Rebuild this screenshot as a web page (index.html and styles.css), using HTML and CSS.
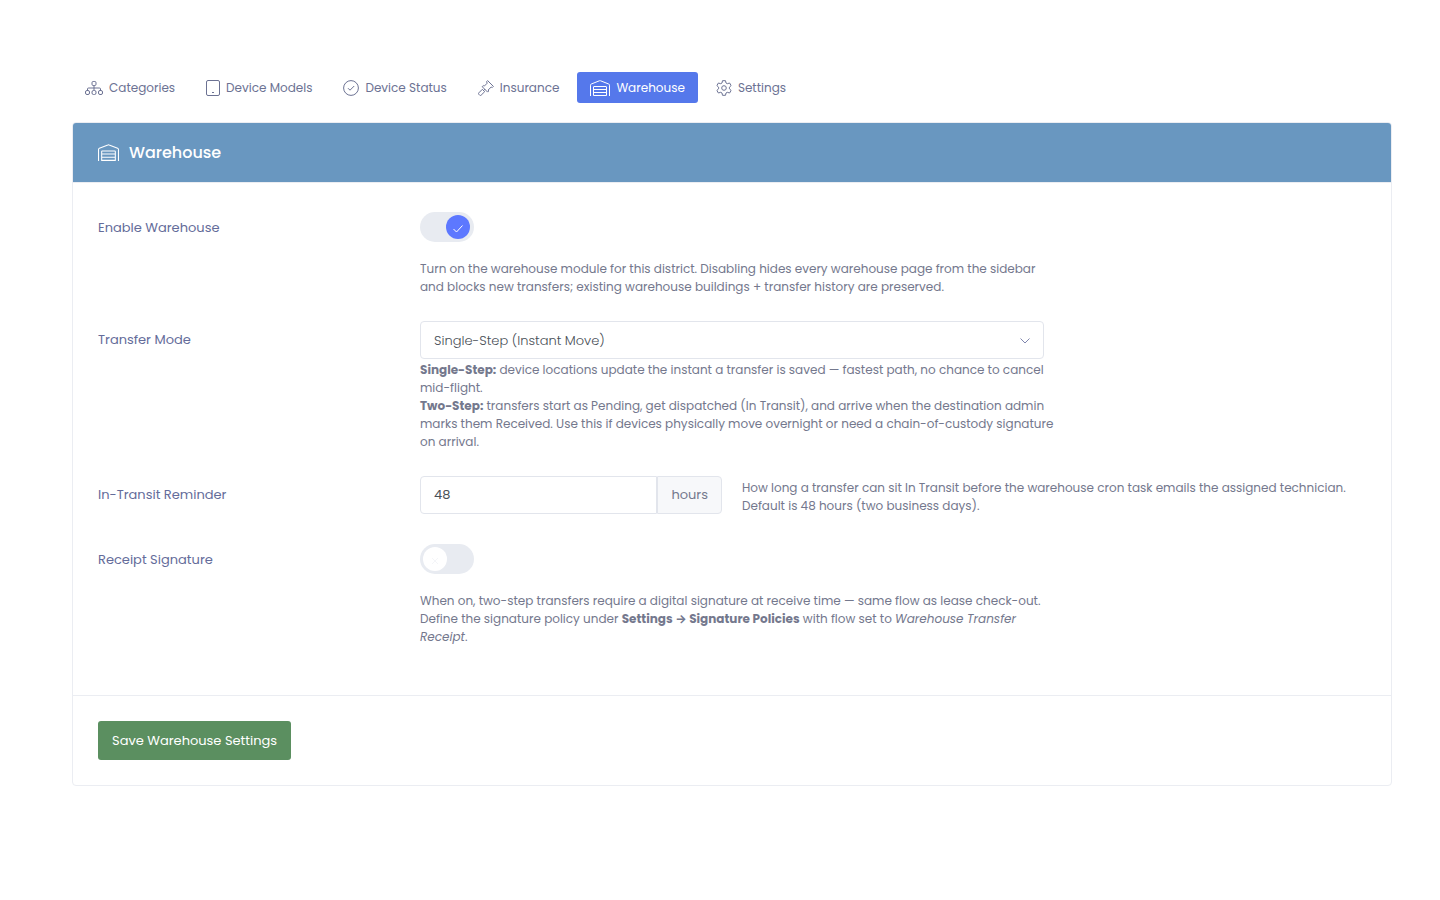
FILE: index.html
```html
<!DOCTYPE html>
<html lang="en">
<head>
    <meta charset="UTF-8">
    <meta name="viewport" content="width=device-width, initial-scale=1.0">
    <title>Warehouse Settings</title>
    <link rel="stylesheet" href="styles.css">
</head>
<body>
    <!-- Shared icon, used in the nav and the card header -->
    <svg class="sprite" aria-hidden="true">
        <symbol id="icon-warehouse" viewBox="0 0 20 16">
            <path d="M.5 16V5.2Q.5 4.3 1.3 4L9.4.8Q10 .5 10.6.8L18.7 4Q19.5 4.3 19.5 5.2V16"/>
            <path d="M3.5 15.5V7Q3.5 6.5 4 6.5H16Q16.5 6.5 16.5 7V15.5ZM3.5 9.5H16.5M3.5 12.5H16.5"/>
        </symbol>
    </svg>

    <div class="page">
        <nav class="nav">
            <a class="nav-link" href="#categories">
                <svg class="icon" width="18" height="16" viewBox="0 0 18 16">
                    <rect x="7" y="1.5" width="4" height="4" rx="1.2"/>
                    <rect x=".5" y="10.5" width="4" height="4" rx="1.5"/>
                    <rect x="7" y="10.5" width="4" height="4" rx="1.5"/>
                    <rect x="13.5" y="10.5" width="4" height="4" rx="1.5"/>
                    <path d="M9 5.5V10.5M2.5 10.5V9Q2.5 8 3.5 8H14.5Q15.5 8 15.5 9V10.5"/>
                </svg>
                Categories
            </a>
            <a class="nav-link" href="#models">
                <svg class="icon" width="14" height="16" viewBox="0 0 14 16">
                    <rect x=".5" y=".5" width="13" height="15" rx="1.5"/>
                    <path d="M6 12.5H8"/>
                </svg>
                Device Models
            </a>
            <a class="nav-link" href="#status">
                <svg class="icon" width="16" height="16" viewBox="0 0 16 16">
                    <circle cx="8" cy="8" r="7.4"/>
                    <path d="M5 8.2L7 10.2L11.2 6"/>
                </svg>
                Device Status
            </a>
            <a class="nav-link" href="#insurance">
                <svg class="icon" width="16" height="16" viewBox="0 0 16 16">
                    <path d="M9.6 .6L15.4 6.4L14.3 7.5L13.2 7L10.2 10L10.7 11L9.6 12.1L4.2 6.7L5.3 5.6L6.3 6.1L9.2 3.2L8.6 1.7Z"/>
                    <path d="M7.2 9L5.6 10.6M4.3 9.3L6.7 11.7L3.1 15.2Q2.4 15.8 1.7 15.2L.8 14.3Q.2 13.6 .8 12.9Z"/>
                </svg>
                Insurance
            </a>
            <a class="nav-link active" href="#warehouse" aria-current="page">
                <svg class="icon" width="20" height="16"><use href="#icon-warehouse"/></svg>
                Warehouse
            </a>
            <a class="nav-link" href="#settings">
                <svg class="icon" width="16" height="16" viewBox="0 0 16 16">
                    <path d="M6.5 .7H9.5L10 3L11.3 3.7L13.6 3L15.1 5.6L13.4 7.2V8.8L15.1 10.4L13.6 13L11.3 12.3L10 13L9.5 15.3H6.5L6 13L4.7 12.3L2.4 13L.9 10.4L2.6 8.8V7.2L.9 5.6L2.4 3L4.7 3.7L6 3Z"/>
                    <circle cx="8" cy="8" r="2.3"/>
                </svg>
                Settings
            </a>
        </nav>

        <form class="card">
            <div class="card-header">
                <svg class="icon" width="21" height="17"><use href="#icon-warehouse"/></svg>
                <h1 class="card-title">Warehouse</h1>
            </div>

            <div class="card-body">
                <div class="row row-switch">
                    <label class="label" for="enable">Enable Warehouse</label>
                    <div class="field">
                        <span class="switch">
                            <input type="checkbox" id="enable" checked>
                            <svg class="switch-mark" width="24" height="24" viewBox="0 0 24 24"><path d="M7.5 14L10.5 17L16.5 10.5"/></svg>
                        </span>
                        <p class="help">Turn on the warehouse module for this district. Disabling hides every warehouse page from the sidebar<br>
                            and blocks new transfers; existing warehouse buildings + transfer history are preserved.</p>
                    </div>
                </div>

                <div class="row">
                    <label class="label" for="mode">Transfer Mode</label>
                    <div class="field">
                        <div class="select">
                            <select class="control" id="mode">
                                <option>Single-Step (Instant Move)</option>
                                <option>Two-Step</option>
                            </select>
                            <svg class="select-arrow" width="10" height="6" viewBox="0 0 10 6"><path d="M.5 .5L5 5L9.5 .5"/></svg>
                        </div>
                        <p class="help"><strong>Single-Step:</strong> device locations update the instant a transfer is saved — fastest path, no chance to cancel<br>
                            mid-flight.<br>
                            <strong>Two-Step:</strong> transfers start as Pending, get dispatched (In Transit), and arrive when the destination admin<br>
                            marks them Received. Use this if devices physically move overnight or need a chain-of-custody signature<br>
                            on arrival.</p>
                    </div>
                </div>

                <div class="row">
                    <label class="label" for="reminder">In-Transit Reminder</label>
                    <div class="input-group">
                        <input class="control" type="text" inputmode="numeric" id="reminder" value="48">
                        <span class="addon">hours</span>
                    </div>
                    <p class="help help-side">How long a transfer can sit In Transit before the warehouse cron task emails the assigned technician.<br>
                        Default is 48 hours (two business days).</p>
                </div>

                <div class="row row-switch">
                    <label class="label" for="signature">Receipt Signature</label>
                    <div class="field">
                        <span class="switch">
                            <input type="checkbox" id="signature">
                            <svg class="switch-mark" width="24" height="24" viewBox="0 0 24 24"><path d="M9 11L15 17M15 11L9 17"/></svg>
                        </span>
                        <p class="help">When on, two-step transfers require a digital signature at receive time — same flow as lease check-out.<br>
                            Define the signature policy under <strong>Settings → Signature Policies</strong> with flow set to <em>Warehouse Transfer<br>
                            Receipt</em>.</p>
                    </div>
                </div>
            </div>

            <div class="card-footer">
                <button class="btn" type="submit">Save Warehouse Settings</button>
            </div>
        </form>
    </div>
</body>
</html>
```
FILE: styles.css
```css
* {
    margin: 0;
    padding: 0;
    box-sizing: border-box;
}

body {
    font-family: Poppins, Inter, sans-serif;
    font-size: 13px;
    color: #646c9a;
    background: #fff;
}

input, select, button {
    font: inherit;
}

.sprite {
    position: absolute;
    width: 0;
    height: 0;
}

.icon {
    flex: none;
    fill: none;
    stroke: currentColor;
    stroke-width: 1;
    stroke-linejoin: round;
}

.page {
    padding: 72px 48px 72px 72px;
}

/* Nav */
.nav {
    display: flex;
    gap: 5px;
    margin-bottom: 19px;
}

.nav-link {
    display: flex;
    align-items: center;
    gap: 6px;
    height: 31px;
    padding: 0 13px;
    border-radius: 3px;
    font-size: 12px;
    color: #6c7293;
    text-decoration: none;
}

.nav-link.active {
    background: #5578eb;
    color: #fff;
}

/* Card */
.card {
    border: 1px solid #ebedf2;
    border-radius: 4px;
}

.card-header {
    display: flex;
    align-items: center;
    gap: 10px;
    height: 60px;
    padding: 0 25px;
    border-bottom: 1px solid #ebedf2;
    border-radius: 3px 3px 0 0;
    background: #6997c0;
    color: #fff;
}

.card-title {
    font-size: 16px;
    font-weight: 500;
}

.card-body {
    display: flex;
    flex-direction: column;
    gap: 25px;
    padding: 25px 25px 49px;
}

.card-footer {
    padding: 25px;
    border-top: 1px solid #ebedf2;
}

/* Form rows */
.row {
    display: grid;
    grid-template-columns: repeat(12, 1fr);
    column-gap: 20px;
    align-items: start;
}

.row-switch {
    padding-top: 4px;
}

.label {
    grid-column: span 3;
    line-height: 38px;
}

.row-switch .label {
    line-height: 32px;
}

.field {
    grid-column: span 6;
    display: flex;
    flex-direction: column;
    gap: 2px;
}

.row-switch .field {
    gap: 18px;
}

.help {
    font-size: 12px;
    line-height: 18px;
    color: #74788d;
    white-space: nowrap;
}

.help-side {
    grid-column: span 6;
    padding-top: 3px;
}

.control {
    width: 100%;
    height: 38px;
    padding: 0 13px;
    border: 1px solid #e2e5ec;
    border-radius: 4px;
    background: #fff;
    color: #495057;
    appearance: none;
}

.select {
    position: relative;
}

.select .control {
    font-weight: 300;
    color: #495057;
}

.select-arrow {
    position: absolute;
    top: 17px;
    right: 14px;
    fill: none;
    stroke: #8086ae;
    pointer-events: none;
}

.input-group {
    grid-column: span 3;
    display: flex;
}

.input-group .control {
    flex: 1;
    min-width: 0;
    border-radius: 4px 0 0 4px;
}

.addon {
    padding: 0 13px;
    border: 1px solid #e2e5ec;
    border-radius: 0 4px 4px 0;
    line-height: 36px;
    background: #f7f8fa;
    color: #74788d;
}

/* Switch */
.switch {
    position: relative;
    width: 54px;
    height: 30px;
}

.switch input {
    display: flex;
    width: 54px;
    height: 30px;
    padding: 3px;
    border-radius: 15px;
    background: #e8ebf1;
    appearance: none;
}

.switch input::before {
    content: "";
    width: 24px;
    height: 24px;
    border-radius: 12px;
    background: #fff;
}

.switch input:checked {
    padding-left: 26px;
}

.switch input:checked::before {
    background: #5d78ff;
}

/* Mark drawn over the knob */
.switch-mark {
    position: absolute;
    top: 3px;
    left: 3px;
    fill: none;
    stroke: #f4f5f8;
    pointer-events: none;
}

.switch input:checked + .switch-mark {
    left: 26px;
    stroke: #fff;
}

.btn {
    height: 39px;
    padding: 0 14px;
    border: 0;
    border-radius: 3px;
    background: #5b8f60;
    color: #fff;
}
```
